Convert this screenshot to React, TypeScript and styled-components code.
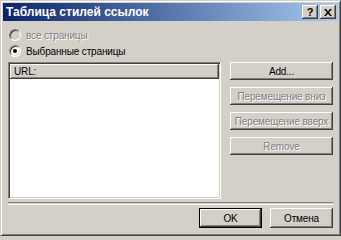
import React from 'react';
import styled, { createGlobalStyle, css } from 'styled-components';

const GlobalStyle = createGlobalStyle`
  html, body {
    margin: 0;
    padding: 0;
    background: #d4d0c8;
  }
  body {
    font-family: "Liberation Sans", Arial, sans-serif;
    font-size: 10px;
    letter-spacing: -0.15px;
    color: #000;
  }
`;

const raised = css`
  background: #d4d0c8;
  box-shadow: inset -1px -1px #404040, inset 1px 1px #fff, inset -2px -2px #808080;
`;

const sunken = css`
  border: 1px solid;
  border-color: #808080 #fff #fff #808080;
  box-shadow: inset 1px 1px #404040, inset -1px -1px #d4d0c8;
`;

const disabledText = css`
  color: #808080;
  text-shadow: 1px 1px 0 #fff;
`;

const Window = styled.div`
  width: 341px;
  height: 236px;
  box-sizing: border-box;
  display: flex;
  flex-direction: column;
  padding: 2px;
  border: 1px solid;
  border-color: #d4d0c8 #404040 #404040 #d4d0c8;
  box-shadow: inset 1px 1px #fff, inset -1px -1px #808080;
  background: #d4d0c8;
`;

const TitleBar = styled.div`
  height: 18px;
  display: flex;
  align-items: center;
  padding: 0 2px 0 3px;
  background: linear-gradient(to right, #0a246a, #a6caf0);
`;

const Title = styled.div`
  flex: 1;
  color: #fff;
  font-weight: bold;
  font-size: 12px;
  letter-spacing: 0;
  white-space: nowrap;
`;

const CaptionButtons = styled.div`
  display: flex;
  gap: 2px;
`;

const CaptionButton = styled.div`
  ${raised};
  width: 16px;
  height: 14px;
  display: flex;
  align-items: center;
  justify-content: center;
  font-weight: bold;
  font-size: 11px;
  line-height: 1;
`;

const Body = styled.div`
  flex: 1;
  display: flex;
  flex-direction: column;
  padding: 6px 5px 0 5px;
`;

const RadioRow = styled.label<{ $disabled?: boolean }>`
  height: 16px;
  display: flex;
  align-items: center;
  gap: 5px;
  padding-left: 1px;
  ${p => p.$disabled && disabledText};
`;

const RadioCircle = styled.span<{ $disabled?: boolean }>`
  ${sunken};
  box-sizing: border-box;
  width: 12px;
  height: 12px;
  border-radius: 50%;
  background: ${p => (p.$disabled ? '#d4d0c8' : '#fff')};
  display: flex;
  align-items: center;
  justify-content: center;
`;

const RadioDot = styled.span`
  width: 4px;
  height: 4px;
  border-radius: 50%;
  background: #000;
`;

const Main = styled.div`
  display: flex;
  gap: 9px;
  margin-top: 3px;
  height: 137px;
`;

const ListBox = styled.div`
  ${sunken};
  width: 213px;
  box-sizing: border-box;
  background: #fff;
  padding: 1px;
`;

const ListHeader = styled.div`
  ${raised};
  height: 15px;
  display: flex;
  align-items: center;
  padding-left: 4px;
`;

const ButtonColumn = styled.div`
  width: 103px;
  display: flex;
  flex-direction: column;
  gap: 7px;
`;

const PushButton = styled.div<{ $disabled?: boolean; $default?: boolean; $w?: number; $h?: number }>`
  ${raised};
  box-sizing: border-box;
  width: ${p => (p.$w ? `${p.$w}px` : '100%')};
  height: ${p => p.$h ?? 18}px;
  display: flex;
  align-items: center;
  justify-content: center;
  white-space: nowrap;
  ${p => p.$disabled && disabledText};
  ${p =>
    p.$default &&
    css`
      border: 1px solid #000;
    `};
`;

const Separator = styled.div`
  margin-top: 3px;
  height: 1px;
  border-top: 1px solid #808080;
  border-bottom: 1px solid #fff;
`;

const Footer = styled.div`
  display: flex;
  justify-content: flex-end;
  gap: 8px;
  padding-top: 3px;
`;

const CloseGlyph = () => (
  <svg width="8" height="7" viewBox="0 0 8 7">
    <path d="M0 0h2l2 2.5L6 0h2L5 3.5 8 7H6L4 4.5 2 7H0l3-3.5z" fill="#000" />
  </svg>
);

export default function App() {
  return (
    <>
      <GlobalStyle />
      <Window>
        <TitleBar>
          <Title>Таблица стилей ссылок</Title>
          <CaptionButtons>
            <CaptionButton>?</CaptionButton>
            <CaptionButton>
              <CloseGlyph />
            </CaptionButton>
          </CaptionButtons>
        </TitleBar>
        <Body>
          <RadioRow $disabled>
            <RadioCircle $disabled />
            все страницы
          </RadioRow>
          <RadioRow>
            <RadioCircle>
              <RadioDot />
            </RadioCircle>
            Выбранные страницы
          </RadioRow>
          <Main>
            <ListBox>
              <ListHeader>URL:</ListHeader>
            </ListBox>
            <ButtonColumn>
              <PushButton>Add...</PushButton>
              <PushButton $disabled>Перемещение вниз</PushButton>
              <PushButton $disabled>Перемещение вверх</PushButton>
              <PushButton $disabled>Remove</PushButton>
            </ButtonColumn>
          </Main>
          <Separator />
          <Footer>
            <PushButton $default $w={63} $h={20}>OK</PushButton>
            <PushButton $w={63} $h={20}>Отмена</PushButton>
          </Footer>
        </Body>
      </Window>
    </>
  );
}
